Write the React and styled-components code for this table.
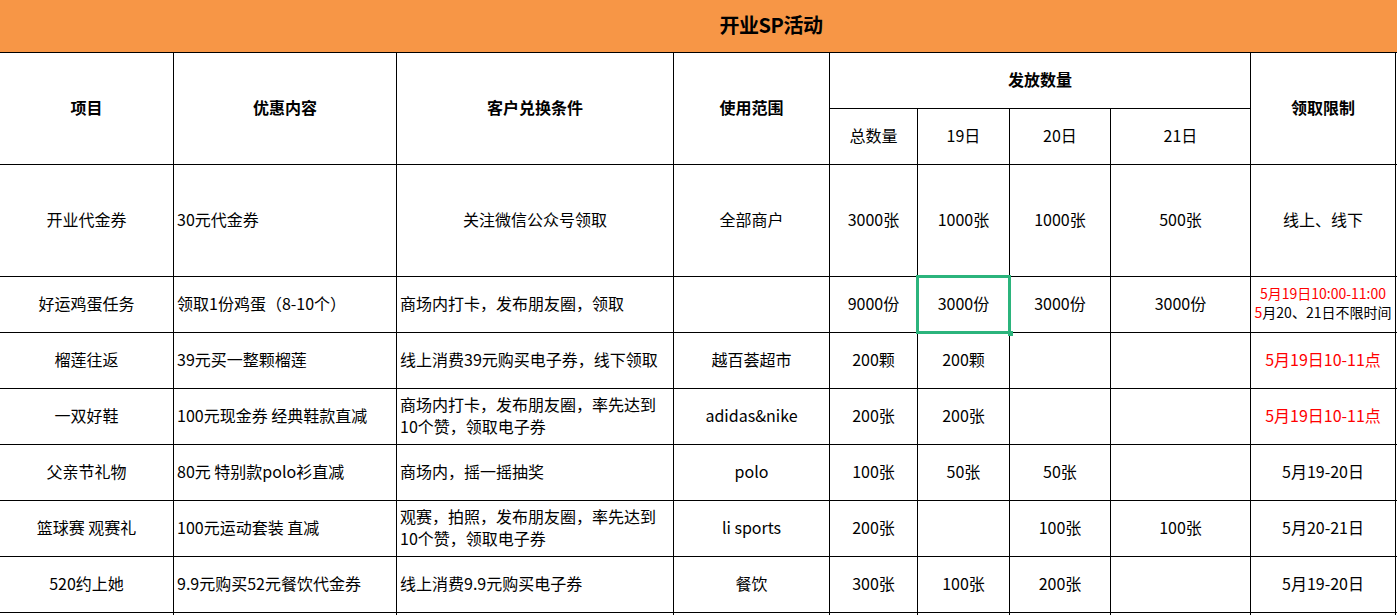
import React from "react";
import styled, { createGlobalStyle, css } from "styled-components";

const Global = createGlobalStyle`
  html, body { margin: 0; padding: 0; background: #fff; }
  body {
    font-family: "Noto Sans CJK SC", "Noto Sans", sans-serif;
    color: #000;
    overflow: hidden;
  }
`;

const Page = styled.div`
  width: 1397px;
  height: 615px;
  overflow: hidden;
  display: flex;
  flex-direction: column;
`;

const TitleBar = styled.div`
  height: 52px;
  flex: none;
  background: #f79646;
  display: flex;
  align-items: center;
  justify-content: center;
  padding: 0 0 3px 145px;
  box-sizing: border-box;
  font-size: 20px;
  font-weight: 700;
  letter-spacing: -0.5px;
`;

const Grid = styled.div`
  display: grid;
  grid-template-columns: 173px 222px 276px 155px 87px 91px 100px 139px 144px 1fr;
  grid-template-rows: 55px 55px 111px repeat(7, 55px) 40px;
  gap: 1px;
  background: #000;
  border-top: 1px solid #000;
  flex: none;
`;

const Cell = styled.div`
  background: #fff;
  display: flex;
  flex-direction: column;
  justify-content: center;
  align-items: ${(p) => (p.$left ? "flex-start" : "center")};
  text-align: ${(p) => (p.$left ? "left" : "center")};
  padding: ${(p) => (p.$left ? "0 2px 4px 3px" : "0 0 4px 0")};
  box-sizing: border-box;
  font-size: 16px;
  line-height: 22px;
  white-space: nowrap;
  position: relative;
  ${(p) => p.$rowSpan && css`grid-row: span ${p.$rowSpan};`}
  ${(p) => p.$colSpan && css`grid-column: span ${p.$colSpan};`}
  ${(p) => p.$bold && css`font-weight: 700;`}
  ${(p) => p.$red && css`color: #ff0000;`}
  ${(p) =>
    p.$selected &&
    css`
      &::after {
        content: "";
        position: absolute;
        inset: -2px;
        border: 3px solid #2bb47c;
        box-sizing: border-box;
        z-index: 2;
        pointer-events: none;
      }
      &::before {
        content: "";
        position: absolute;
        right: -4px;
        bottom: -4px;
        width: 5px;
        height: 5px;
        background: #2bb47c;
        z-index: 3;
      }
    `}
`;

const SmallLine = styled.span`
  font-size: 14px;
  line-height: 19px;
  color: ${(p) => (p.$red ? "#ff0000" : "#000")};
`;

const Red = styled.span`
  color: #ff0000;
`;

const RED_LIMIT = "5月19日10-11点";

const rows = [
  {
    name: "开业代金券",
    offer: "30元代金券",
    cond: ["关注微信公众号领取"],
    condCenter: true,
    scope: "全部商户",
    q: ["3000张", "1000张", "1000张", "500张"],
    limit: "线上、线下",
  },
  {
    name: "好运鸡蛋任务",
    offer: "领取1份鸡蛋（8-10个）",
    cond: ["商场内打卡，发布朋友圈，领取"],
    scope: "",
    q: ["9000份", "3000份", "3000份", "3000份"],
    limit: "eggs",
    selected: 1,
  },
  {
    name: "榴莲往返",
    offer: "39元买一整颗榴莲",
    cond: ["线上消费39元购买电子券，线下领取"],
    scope: "越百荟超市",
    q: ["200颗", "200颗", "", ""],
    limit: RED_LIMIT,
    red: true,
  },
  {
    name: "一双好鞋",
    offer: "100元现金券 经典鞋款直减",
    cond: ["商场内打卡，发布朋友圈，率先达到", "10个赞，领取电子券"],
    scope: "adidas&nike",
    q: ["200张", "200张", "", ""],
    limit: RED_LIMIT,
    red: true,
  },
  {
    name: "父亲节礼物",
    offer: "80元 特别款polo衫直减",
    cond: ["商场内，摇一摇抽奖"],
    scope: "polo",
    q: ["100张", "50张", "50张", ""],
    limit: "5月19-20日",
  },
  {
    name: "篮球赛 观赛礼",
    offer: "100元运动套装 直减",
    cond: ["观赛，拍照，发布朋友圈，率先达到", "10个赞，领取电子券"],
    scope: "li sports",
    q: ["200张", "", "100张", "100张"],
    limit: "5月20-21日",
  },
  {
    name: "520约上她",
    offer: "9.9元购买52元餐饮代金券",
    cond: ["线上消费9.9元购买电子券"],
    scope: "餐饮",
    q: ["300张", "100张", "200张", ""],
    limit: "5月19-20日",
  },
];

function LimitCell({ row }) {
  if (row.limit === "eggs") {
    return (
      <Cell>
        <SmallLine $red>5月19日10:00-11:00</SmallLine>
        <SmallLine>
          <Red>5</Red>月20、21日不限时间
        </SmallLine>
      </Cell>
    );
  }
  return <Cell $red={row.red}>{row.limit}</Cell>;
}

export default function App() {
  return (
    <Page>
      <Global />
      <TitleBar>开业SP活动</TitleBar>
      <Grid>
        <Cell $bold $rowSpan={2}>项目</Cell>
        <Cell $bold $rowSpan={2}>优惠内容</Cell>
        <Cell $bold $rowSpan={2}>客户兑换条件</Cell>
        <Cell $bold $rowSpan={2}>使用范围</Cell>
        <Cell $bold $colSpan={4}>发放数量</Cell>
        <Cell $bold $rowSpan={2}>领取限制</Cell>
        <Cell $rowSpan={2} />
        <Cell>总数量</Cell>
        <Cell>19日</Cell>
        <Cell>20日</Cell>
        <Cell>21日</Cell>

        {rows.map((row, i) => (
          <React.Fragment key={i}>
            <Cell>{row.name}</Cell>
            <Cell $left>{row.offer}</Cell>
            <Cell $left={!row.condCenter}>
              {row.cond.map((line, j) => (
                <span key={j}>{line}</span>
              ))}
            </Cell>
            <Cell>{row.scope}</Cell>
            {row.q.map((v, j) => (
              <Cell key={j} $selected={row.selected === j}>
                {v}
              </Cell>
            ))}
            <LimitCell row={row} />
            <Cell />
          </React.Fragment>
        ))}

        {Array.from({ length: 10 }).map((_, i) => (
          <Cell key={"e" + i} />
        ))}
      </Grid>
    </Page>
  );
}
